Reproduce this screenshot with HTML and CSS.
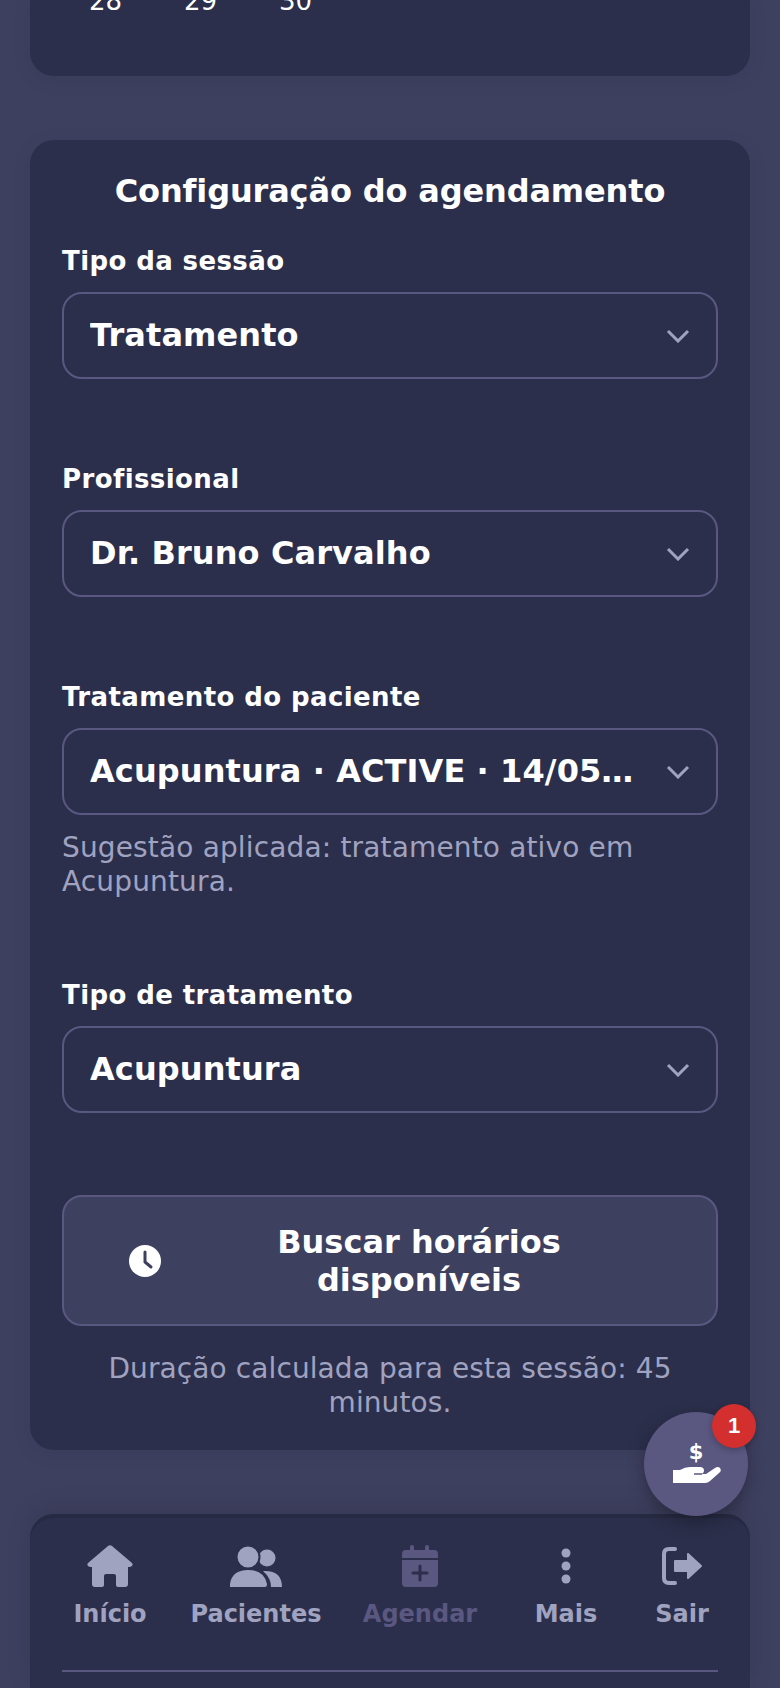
FILE: index.html
```html
<!DOCTYPE html>
<html lang="pt-BR">
<head>
    <meta charset="UTF-8">
    <meta name="viewport" content="width=device-width, initial-scale=1.0">
    <title>Agendar</title>
    <link rel="stylesheet" href="styles.css">
</head>
<body>
    <div class="screen">
        <main class="content">
            <section class="card calendar-card">
                <div class="calendar-row">
                    <span>28</span>
                    <span>29</span>
                    <span>30</span>
                </div>
            </section>

            <section class="card config-card">
                <h2 class="card-title">Configuração do agendamento</h2>

                <div class="field">
                    <label class="field-label">Tipo da sessão</label>
                    <div class="select">
                        <span class="select-value">Tratamento</span>
                        <svg class="chevron" viewBox="0 0 24 14"><path d="M2 2l10 10L22 2"/></svg>
                    </div>
                </div>

                <div class="field">
                    <label class="field-label">Profissional</label>
                    <div class="select">
                        <span class="select-value">Dr. Bruno Carvalho</span>
                        <svg class="chevron" viewBox="0 0 24 14"><path d="M2 2l10 10L22 2"/></svg>
                    </div>
                </div>

                <div class="field field-hint">
                    <label class="field-label">Tratamento do paciente</label>
                    <div class="select">
                        <span class="select-value">Acupuntura · ACTIVE · 14/05…</span>
                        <svg class="chevron" viewBox="0 0 24 14"><path d="M2 2l10 10L22 2"/></svg>
                    </div>
                    <p class="hint">Sugestão aplicada: tratamento ativo em Acupuntura.</p>
                </div>

                <div class="field field-last">
                    <label class="field-label">Tipo de tratamento</label>
                    <div class="select">
                        <span class="select-value">Acupuntura</span>
                        <svg class="chevron" viewBox="0 0 24 14"><path d="M2 2l10 10L22 2"/></svg>
                    </div>
                </div>

                <button class="search-btn">
                    <svg class="clock-icon" viewBox="0 0 32 32">
                        <circle cx="16" cy="16" r="16" fill="#fff"/>
                        <path d="M16 7v10l6 5" fill="none" stroke="#3e4060" stroke-width="3" stroke-linecap="round" stroke-linejoin="round"/>
                    </svg>
                    <span class="search-btn-text">Buscar horários disponíveis</span>
                </button>

                <p class="duration">Duração calculada para esta sessão: 45 minutos.</p>
            </section>
        </main>

        <nav class="bottom-nav">
            <div class="nav-items">
                <a class="nav-item">
                    <svg width="46" height="42" viewBox="0 0 46 42"><path d="M21 1Q23-.5 25 1L45 18Q47 21 43 22H41V39Q41 42 38 42H31Q29 42 29 40V31Q29 29 27 29H19Q17 29 17 31V40Q17 42 15 42H8Q5 42 5 39V22H3Q-1 21 1 18Z"/></svg>
                    <span>Início</span>
                </a>
                <a class="nav-item">
                    <svg width="52" height="42" viewBox="0 0 52 42">
                        <circle cx="37" cy="13" r="8.5"/>
                        <path d="M33 26Q52 25 52 42H41Q41 33 33 26Z"/>
                        <circle cx="18" cy="12" r="11.5" stroke="#2c2f4b" stroke-width="2"/>
                        <path d="M1 42Q-1 42 0 39Q2 25 18 25Q34 25 37 39Q37 42 35 42Z"/>
                    </svg>
                    <span>Pacientes</span>
                </a>
                <a class="nav-item nav-item-active">
                    <svg width="36" height="42" viewBox="0 0 36 42">
                        <rect x="8" y="0" width="4" height="8" rx="2"/>
                        <rect x="23" y="0" width="4" height="8" rx="2"/>
                        <path d="M4 5H32Q36 5 36 9V13H0V9Q0 5 4 5Z"/>
                        <path d="M0 15H36V38Q36 42 32 42H4Q0 42 0 38Z"/>
                        <path d="M18 21V35M11 28H25" stroke="#2c2f4b" stroke-width="3" stroke-linecap="round"/>
                    </svg>
                    <span>Agendar</span>
                </a>
                <a class="nav-item">
                    <svg width="10" height="42" viewBox="0 0 10 42">
                        <circle cx="5" cy="8" r="4.5"/>
                        <circle cx="5" cy="21" r="4.5"/>
                        <circle cx="5" cy="34" r="4.5"/>
                    </svg>
                    <span>Mais</span>
                </a>
                <a class="nav-item">
                    <svg width="42" height="42" viewBox="0 0 42 42">
                        <path d="M14 4H8Q3 4 3 9V33Q3 38 8 38H14" fill="none" stroke="#a0a3c0" stroke-width="4" stroke-linecap="round"/>
                        <path d="M14 16H27V9L40 21 27 33V26H14Z" stroke="#a0a3c0" stroke-width="2" stroke-linejoin="round"/>
                    </svg>
                    <span>Sair</span>
                </a>
            </div>
            <div class="nav-line"></div>
        </nav>

        <button class="fab">
            <svg class="fab-icon" width="48" height="44" viewBox="0 0 48 44">
                <text x="23" y="18" text-anchor="middle" class="fab-dollar">$</text>
                <path d="M0 29H7Q12 26 17 26H27Q31 26 31 29.5Q31 32 28 33H33L42 27Q45 25 47 27Q49 30 46 32L37 40Q35 42 32 42H0Z"/>
                <path d="M21 33H29" stroke="#5a5780" stroke-width="1.5"/>
            </svg>
            <span class="fab-badge">1</span>
        </button>
    </div>
</body>
</html>
```

FILE: styles.css
```css
* {
    box-sizing: border-box;
}
body {
    margin: 0;
    font-family: "DejaVu Sans", sans-serif;
    background: #3e4060;
}
.screen {
    position: relative;
    display: flex;
    flex-direction: column;
    height: 1688px;
    overflow: hidden;
}
.content {
    flex: 1;
    display: flex;
    flex-direction: column;
    gap: 64px;
    padding: 0 30px;
}
.card {
    background: #2c2f4b;
    border-radius: 24px;
    box-shadow: 0 4px 20px rgba(0,0,0,0.08);
}
.calendar-card {
    height: 76px;
    border-radius: 0 0 24px 24px;
    overflow: hidden;
}
.calendar-row {
    display: grid;
    grid-template-columns: repeat(7, 95px);
    margin: -18px 0 0 28px;
    color: #fff;
    font-size: 26px;
    line-height: 38px;
    text-align: center;
}
.config-card {
    padding: 30px 32px;
}
.card-title {
    margin: 0 0 33px;
    color: #fff;
    font-size: 32px;
    line-height: 42px;
    font-weight: 700;
    letter-spacing: -0.15px;
    text-align: center;
}
.field {
    margin-bottom: 84px;
}
.field-hint {
    margin-bottom: 80px;
}
.field-last {
    margin-bottom: 82px;
}
.field-label {
    display: block;
    margin-bottom: 15px;
    color: #fff;
    font-size: 26px;
    line-height: 32px;
    font-weight: 700;
    letter-spacing: 0.4px;
}
.select {
    display: flex;
    align-items: center;
    justify-content: space-between;
    gap: 18px;
    height: 87px;
    padding: 0 26px;
    border: 2px solid #5a5780;
    border-radius: 20px;
}
.select-value {
    overflow: hidden;
    padding-bottom: 2px;
    color: #fff;
    font-size: 32px;
    font-weight: 700;
    letter-spacing: 0.1px;
    white-space: nowrap;
    text-overflow: ellipsis;
}
.chevron {
    flex: none;
    width: 24px;
    height: 14px;
    fill: none;
    stroke: #a0a3c0;
    stroke-width: 3;
}
.hint {
    margin: 16px 0 0;
    color: #a0a3c0;
    font-size: 28px;
    line-height: 34px;
    letter-spacing: 0.15px;
}
.search-btn {
    display: flex;
    align-items: center;
    gap: 26px;
    width: 100%;
    height: 131px;
    padding: 0 65px;
    background: #3e4060;
    border: 2px solid #5a5780;
    border-radius: 20px;
    color: #fff;
    font-family: inherit;
}
.clock-icon {
    flex: none;
    width: 32px;
    height: 32px;
}
.search-btn-text {
    flex: 1;
    font-size: 32px;
    line-height: 38px;
    font-weight: 700;
    text-align: center;
}
.duration {
    margin: 26px 0 0;
    color: #a0a3c0;
    font-size: 28px;
    line-height: 34px;
    letter-spacing: 0.1px;
    text-align: center;
}
.bottom-nav {
    flex: none;
    height: 174px;
    margin: 0 30px;
    padding: 31px 32px 0;
    background: #2c2f4b;
    border-radius: 24px 24px 0 0;
    box-shadow: inset 0 4px 0 rgba(0,0,0,0.1), 0 -6px 24px rgba(0,0,0,0.12);
}
.nav-items {
    display: grid;
    grid-template-columns: 96px 196px 132px 160px 72px;
}
.nav-item {
    display: flex;
    flex-direction: column;
    align-items: center;
    gap: 11px;
    color: #a0a3c0;
    fill: #a0a3c0;
    font-size: 24px;
    line-height: 32px;
    font-weight: 700;
}
.nav-item-active {
    color: #5a5780;
    fill: #5a5780;
}
.nav-line {
    height: 2px;
    margin-top: 40px;
    background: #5a5780;
}
.fab {
    position: absolute;
    top: 1412px;
    left: 644px;
    width: 104px;
    height: 104px;
    padding: 0;
    border: none;
    border-radius: 50%;
    background: #5a5780;
    box-shadow: 0 6px 18px rgba(0,0,0,0.3);
}
.fab-icon {
    position: absolute;
    top: 29px;
    left: 29px;
    fill: #fff;
}
.fab-dollar {
    font-family: "DejaVu Sans", sans-serif;
    font-size: 21px;
    font-weight: 700;
}
.fab-badge {
    position: absolute;
    top: -8px;
    right: -8px;
    width: 44px;
    height: 44px;
    border-radius: 50%;
    background: #d32f2f;
    box-shadow: 0 2px 6px rgba(0,0,0,0.25);
    color: #fff;
    font-family: inherit;
    font-size: 22px;
    line-height: 44px;
    font-weight: 700;
    text-align: center;
}
```
